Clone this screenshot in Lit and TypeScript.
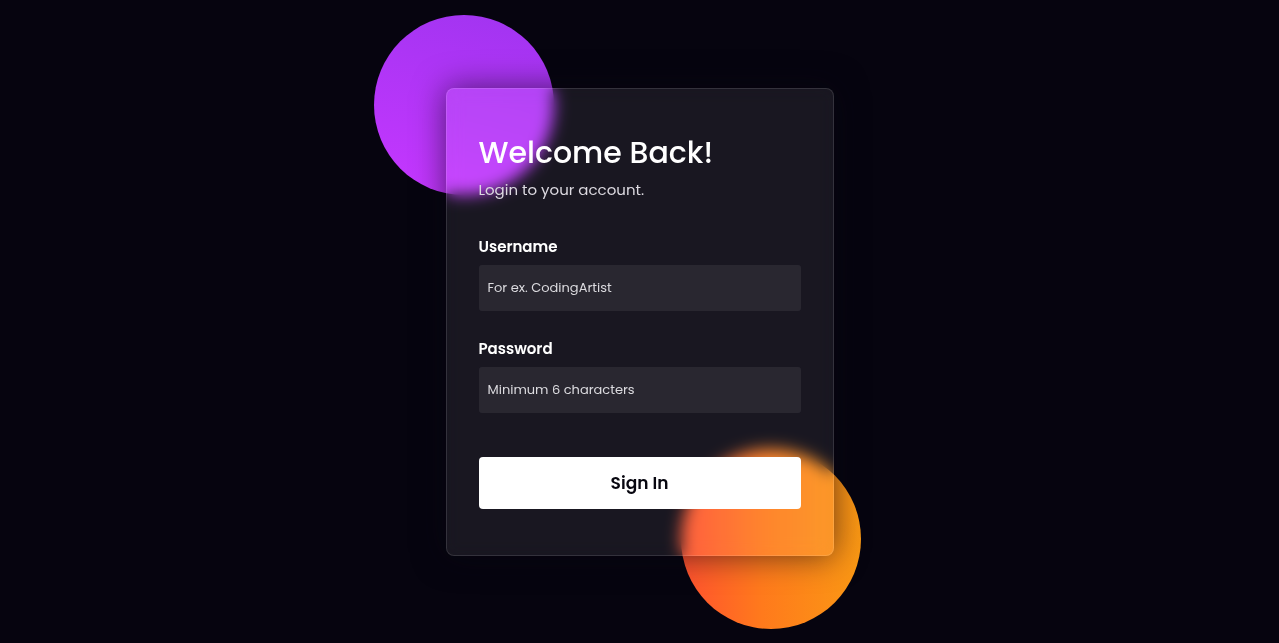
import { LitElement, html, css } from "lit";
import { customElement } from "lit/decorators.js";

@customElement("login-card")
export class LoginCard extends LitElement {
  static styles = css`
    :host {
      display: block;
    }
    .card {
      box-sizing: border-box;
      padding: 40px 32px 46px;
      border: 1px solid rgba(255, 255, 255, 0.12);
      border-radius: 8px;
      background: rgba(255, 255, 255, 0.08);
      backdrop-filter: blur(8px);
      box-shadow: 0 0 32px rgba(8, 7, 16, 0.6);
      color: #ffffff;
    }
    .title {
      margin: 0;
      font-size: 30px;
      font-weight: 500;
      line-height: 48px;
    }
    .subtitle {
      margin: 0 0 32px;
      font-size: 15px;
      line-height: 26px;
      color: #dcd9e0;
    }
    .field {
      display: flex;
      flex-direction: column;
      gap: 6px;
      margin-bottom: 26px;
    }
    .label {
      font-size: 15px;
      font-weight: 600;
      line-height: 24px;
    }
    .input {
      box-sizing: border-box;
      width: 100%;
      height: 46px;
      padding: 0 9px;
      border: 0;
      border-radius: 3px;
      background: rgba(255, 255, 255, 0.07);
      color: #ffffff;
      font: inherit;
      font-size: 13px;
    }
    .input::placeholder {
      color: #dcdbdf;
      opacity: 1;
    }
    .button {
      display: block;
      width: 100%;
      height: 52px;
      margin-top: 44px;
      padding: 0;
      border: 0;
      border-radius: 4px;
      background: #ffffff;
      color: #080710;
      font: inherit;
      font-size: 17px;
      font-weight: 600;
      cursor: pointer;
    }
  `;

  render() {
    return html`
      <form class="card" @submit=${(e: Event) => e.preventDefault()}>
        <h1 class="title">Welcome Back!</h1>
        <p class="subtitle">Login to your account.</p>
        <div class="field">
          <label class="label" for="username">Username</label>
          <input class="input" id="username" type="text" placeholder="For ex. CodingArtist" />
        </div>
        <div class="field">
          <label class="label" for="password">Password</label>
          <input class="input" id="password" type="password" placeholder="Minimum 6 characters" />
        </div>
        <button class="button" type="submit">Sign In</button>
      </form>
    `;
  }
}

@customElement("app-root")
export class AppRoot extends LitElement {
  static styles = css`
    :host {
      display: grid;
      justify-items: center;
      align-items: center;
      min-height: 100vh;
      overflow: hidden;
      background: #06040f;
      font-family: Poppins, Inter, sans-serif;
    }
    .stage {
      position: relative;
      width: 100%;
      max-width: 388px;
    }
    .orb {
      position: absolute;
      width: 180px;
      height: 180px;
      border-radius: 50%;
    }
    .violet {
      top: -73px;
      left: -72px;
      background: linear-gradient(195deg, #a034f0, #c637ff);
    }
    .orange {
      right: -27px;
      bottom: -73px;
      background: linear-gradient(to right, #ff512f, #ff7a1c 45%, #fa9814);
    }
  `;

  render() {
    return html`
      <main class="stage">
        <div class="orb violet"></div>
        <div class="orb orange"></div>
        <login-card></login-card>
      </main>
    `;
  }
}
